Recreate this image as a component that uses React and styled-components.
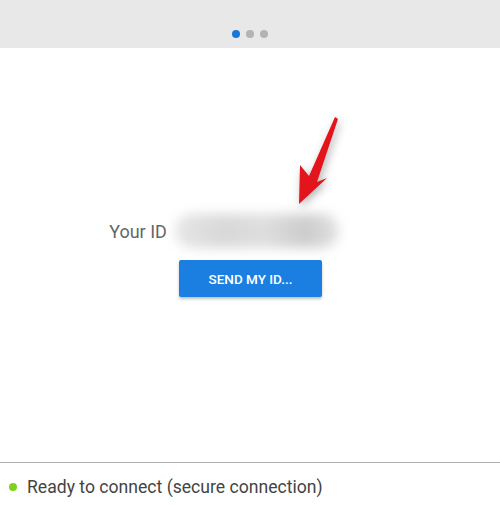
import React from 'react';
import styled, { createGlobalStyle } from 'styled-components';

const GlobalStyle = createGlobalStyle`
  html, body { margin: 0; padding: 0; background: #fff; }
  body { font-family: Roboto, "Liberation Sans", sans-serif; }
`;

const Page = styled.div`
  position: relative;
  width: 500px;
  height: 505px;
  display: flex;
  flex-direction: column;
  overflow: hidden;
  background: #fff;
`;

const TopBar = styled.div`
  height: 48px;
  background: #e8e8e8;
  display: flex;
  justify-content: center;
  align-items: flex-end;
  padding-bottom: 10px;
  box-sizing: border-box;
`;

const Dot = styled.span`
  width: 8px;
  height: 8px;
  border-radius: 50%;
  background: ${(p) => (p.active ? '#1677d6' : '#b3b3b3')};
`;

const Dots = styled.div`
  display: flex;
  gap: 6px;
  margin-right: 1px;
`;

const Main = styled.div`
  flex: 1;
  display: flex;
  flex-direction: column;
  align-items: center;
  padding-top: 163px;
  box-sizing: border-box;
`;

const IdRow = styled.div`
  display: flex;
  align-items: center;
  margin-right: 52px;
  height: 40px;
`;

const IdLabel = styled.span`
  font-size: 18px;
  color: #666;
  margin-right: 8px;
`;

const Blur = styled.div`
  width: 164px;
  height: 34px;
  border-radius: 17px;
  background: linear-gradient(90deg, #e6e6e6 0%, #d8d8d8 30%, #dedede 55%, #cccccc 80%, #e2e2e2 100%);
  filter: blur(6px);
`;

const SendButton = styled.button`
  margin-top: 9px;
  width: 143px;
  height: 37px;
  border: none;
  border-radius: 2px;
  background: #1a7fe0;
  color: #fff;
  font-family: Roboto, "Liberation Sans", sans-serif;
  font-weight: 500;
  font-size: 13.5px;
  box-shadow: 0 2px 3px rgba(0, 0, 0, 0.25);
  margin-left: 1px;
`;

const Footer = styled.div`
  height: 43px;
  box-sizing: border-box;
  border-top: 1px solid #b0b0b0;
  display: flex;
  align-items: center;
  padding-left: 9px;
  padding-top: 6px;
  gap: 10px;
`;

const StatusDot = styled.span`
  width: 8px;
  height: 8px;
  border-radius: 50%;
  background: #7fd11b;
`;

const StatusText = styled.span`
  font-size: 17.6px;
  color: #444;
`;

const Arrow = styled.svg`
  position: absolute;
  left: 0;
  top: 0;
  pointer-events: none;
  filter: drop-shadow(2px 3px 4px rgba(0, 0, 0, 0.3));
`;

export default function App() {
  return (
    <Page>
      <GlobalStyle />
      <TopBar>
        <Dots>
          <Dot active />
          <Dot />
          <Dot />
        </Dots>
      </TopBar>
      <Main>
        <IdRow>
          <IdLabel>Your ID</IdLabel>
          <Blur />
        </IdRow>
        <SendButton>SEND MY ID...</SendButton>
      </Main>
      <Footer>
        <StatusDot />
        <StatusText>Ready to connect (secure connection)</StatusText>
      </Footer>
      <Arrow width="500" height="505" viewBox="0 0 500 505">
        <polygon
          points="299,204 300,165 309,176 335,117 338,119 317,182 327,178"
          fill="#e3141c"
        />
      </Arrow>
    </Page>
  );
}
